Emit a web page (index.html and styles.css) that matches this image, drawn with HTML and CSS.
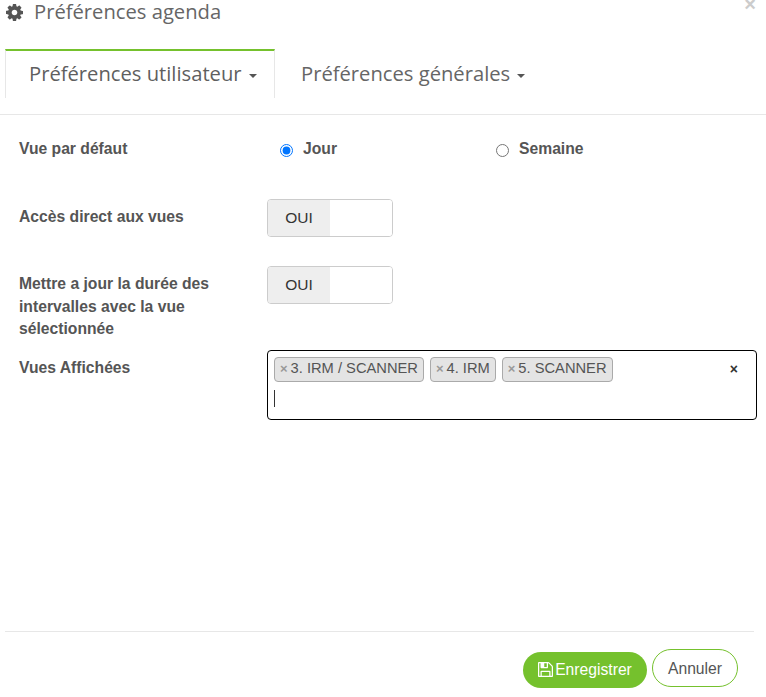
FILE: index.html
```html
<!DOCTYPE html>
<html lang="fr">
<head>
<meta charset="utf-8">
<title>Préférences agenda</title>
<link rel="stylesheet" href="styles.css">
</head>
<body>
<div class="modal">
  <header class="modal-head">
    <svg class="gear" viewBox="0 0 1536 1536" aria-hidden="true"><path fill="#555" d="M1024 768q0-106-75-181t-181-75-181 75-75 181 75 181 181 75 181-75 75-181zm512-109v222q0 12-8 23t-20 13l-185 28q-19 54-39 91 35 50 107 138 10 12 10 25t-9 23q-27 37-99 108t-94 71q-12 0-26-9l-138-108q-44 23-91 38-16 136-29 186-7 28-36 28h-222q-14 0-24.500-8.500t-11.500-21.500l-28-184q-49-16-90-37l-141 107q-10 9-25 9-14 0-25-11-126-114-165-168-7-10-7-23 0-12 8-23 15-21 51-66.500t54-70.500q-27-50-41-99l-183-27q-13-2-21-12.500t-8-23.500v-222q0-12 8-23t19-13l186-28q14-46 39-92-40-57-107-138-10-12-10-24 0-10 9-23 26-36 98.500-107.500t94.500-71.500q13 0 26 10l138 107q44-23 91-38 16-136 29-186 7-28 36-28h222q14 0 24.500 8.500t11.500 21.500l28 184q49 16 90 37l142-107q9-9 24-9 13 0 25 10 129 119 165 170 7 8 7 22 0 12-8 23-15 21-51 66.500t-54 70.500q26 50 41 98l183 28q13 2 21 12.500t8 23.500z"/></svg>
    <h1 class="modal-title">Préférences agenda</h1>
    <span class="close">×</span>
  </header>
  <nav class="tabs">
    <div class="tab active">Préférences utilisateur <span class="caret"></span></div>
    <div class="tab">Préférences générales <span class="caret"></span></div>
  </nav>
  <main class="form">
    <div class="row row-view">
      <div class="label">Vue par défaut</div>
      <div class="radios">
        <label class="radio radio-day"><input type="radio" name="vue" checked><span>Jour</span></label>
        <label class="radio"><input type="radio" name="vue"><span>Semaine</span></label>
      </div>
    </div>
    <div class="row row-direct">
      <div class="label label-switch">Accès direct aux vues</div>
      <div class="switch"><span class="switch-on">OUI</span><span class="switch-off"></span></div>
    </div>
    <div class="row row-update">
      <div class="label label-switch">Mettre a jour la durée des intervalles avec la vue sélectionnée</div>
      <div class="switch"><span class="switch-on">OUI</span><span class="switch-off"></span></div>
    </div>
    <div class="row row-views">
      <div class="label label-views">Vues Affichées</div>
      <div class="select">
        <div class="chips">
          <span class="chip"><span class="chip-x">×</span>3. IRM / SCANNER</span>
          <span class="chip"><span class="chip-x">×</span>4. IRM</span>
          <span class="chip"><span class="chip-x">×</span>5. SCANNER</span>
        </div>
        <span class="clear">×</span>
        <div class="cursor"></div>
      </div>
    </div>
  </main>
  <footer class="modal-foot">
    <button class="btn btn-save" type="button">
      <svg class="save" viewBox="0 0 1536 1536" aria-hidden="true"><path fill="#fff" d="M384 1408h768v-384H384v384zm896 0h128V512q0-14-10-38.500t-20-34.500l-281-281q-10-10-34-20t-39-10v416q0 40-28 68t-68 28H352q-40 0-68-28t-28-68V128H128v1280h128V992q0-40 28-68t68-28h832q40 0 68 28t28 68v416zM896 480V160q0-13-9.500-22.500T864 128H672q-13 0-22.500 9.500T640 160v320q0 13 9.500 22.500T672 512h192q13 0 22.500-9.500T896 480zm640 32v928q0 40-28 68t-68 28H96q-40 0-68-28t-28-68V96q0-40 28-68T96 0h928q40 0 88 20t76 48l280 280q28 28 48 76t20 88z"/></svg>Enregistrer
    </button>
    <button class="btn btn-cancel" type="button">Annuler</button>
  </footer>
</div>
</body>
</html>
```
FILE: styles.css
```css
* { box-sizing: border-box; }
html, body { margin: 0; height: 100%; background: #fff; }
body { overflow: hidden; }
.modal {
  height: 697px;
  display: flex;
  flex-direction: column;
  color: #555;
  font-family: "Liberation Sans", Arial, sans-serif;
}
.modal-head {
  height: 49px;
  display: flex;
  align-items: flex-start;
  padding: 0 0 0 6px;
  position: relative;
}
.gear { width: 17px; height: 17px; margin-top: 4px; }
.modal-title {
  margin: 0 0 0 11px;
  font: 400 20.2px/22px "Open Sans", sans-serif;
  color: #666;
}
.close {
  position: absolute;
  right: 10px;
  top: 0;
  font: 700 20px/9px "Liberation Sans", sans-serif;
  color: #ccc;
}
.tabs {
  height: 66px;
  border-bottom: 1px solid #e7e7e7;
  display: flex;
  padding-left: 5px;
  align-items: flex-start;
}
.tab {
  height: 49px;
  padding: 12px 26px 0 26px;
  font: 400 20.2px/24px "Open Sans", sans-serif;
  color: #666;
  white-space: nowrap;
}
.tab.active {
  width: 270px;
  padding: 10px 0 0 23px;
  border-top: 2px solid #75c12d;
  border-left: 1px solid #e7e7e7;
  border-right: 1px solid #e7e7e7;
  color: #5f5f5f;
}
.caret {
  display: inline-block;
  width: 0;
  height: 0;
  margin-left: 2px;
  vertical-align: 3px;
  border-top: 4px solid #555;
  border-left: 4px solid transparent;
  border-right: 4px solid transparent;
}
.form { padding: 0 9px 0 19px; }
.row {
  display: grid;
  grid-template-columns: 248px 1fr;
}
.row-view { height: 84px; padding-top: 23px; }
.row-direct { height: 67px; }
.row-update { height: 84px; }
.label {
  font-size: 15.7px;
  font-weight: 700;
  line-height: 22.5px;
  color: #555;
}
.label-switch { padding-top: 7px; padding-right: 30px; }
.label-views { padding-top: 7px; }
.radios { display: flex; }
.radio {
  display: flex;
  align-items: flex-start;
  font-size: 15.7px;
  font-weight: 700;
  line-height: 22px;
  color: #555;
}
.radio-day { width: 229px; padding-left: 13px; }
.radio input {
  width: 13px;
  height: 13px;
  margin: 6px 10px 0 0;
}
.switch {
  display: flex;
  width: 126px;
  height: 38px;
  border: 1px solid #ccc;
  border-radius: 4px;
  overflow: hidden;
}
.switch-on {
  width: 62px;
  background: #eee;
  color: #333;
  font-size: 15.5px;
  line-height: 36px;
  text-align: center;
}
.switch-off { flex: 1; background: #fff; }
.select {
  position: relative;
  width: 490px;
  height: 70px;
  border: 1px solid #000;
  border-radius: 4px;
  padding: 6px 6px 0;
}
.chips { display: flex; gap: 6px; }
.chip {
  height: 25px;
  padding: 0 5px;
  background: #e4e4e4;
  border: 1px solid #aaa;
  border-radius: 4px;
  font-size: 14.7px;
  line-height: 21px;
  color: #555;
  white-space: nowrap;
}
.chip-x { color: #999; font-weight: 700; font-size: 13px; margin-right: 3px; }
.clear {
  position: absolute;
  right: 18px;
  top: 8px;
  font-size: 14px;
  font-weight: 700;
  line-height: 20px;
  color: #333;
}
.cursor { width: 1px; height: 17px; margin: 8px 0 0 0; background: #333; }
.modal-foot {
  margin: auto 12px 0 5px;
  height: 66px;
  border-top: 1px solid #e7e7e7;
  display: flex;
  justify-content: flex-end;
  align-items: flex-start;
  padding-right: 16px;
  gap: 5px;
}
.btn {
  font-family: "Liberation Sans", sans-serif;
  font-size: 15.7px;
  border-radius: 19px;
  cursor: pointer;
  padding: 0;
}
.btn-save {
  width: 124px;
  height: 36px;
  margin-top: 20px;
  padding-bottom: 1px;
  background: #75c12d;
  border: 0;
  color: #fff;
  display: flex;
  align-items: center;
  justify-content: center;
  gap: 2px;
}
.save { width: 15px; height: 15px; }
.btn-cancel {
  width: 86px;
  height: 38px;
  margin-top: 17px;
  padding-top: 1px;
  background: #fff;
  border: 1px solid #75c12d;
  color: #555;
}
```
